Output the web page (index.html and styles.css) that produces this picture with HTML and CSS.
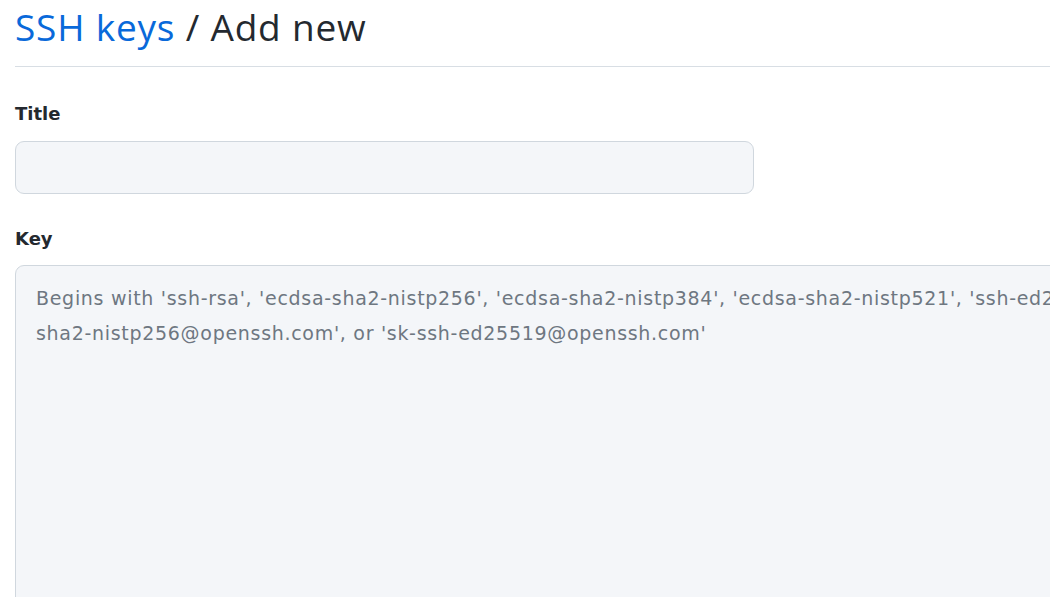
FILE: index.html
```html
<!DOCTYPE html>
<html lang="en">
<head>
<meta charset="utf-8">
<title>SSH keys / Add new</title>
<link rel="stylesheet" href="styles.css">
</head>
<body>
<main class="page">
  <h1 class="page-title"><a class="crumb" href="#">SSH keys</a> / Add new</h1>
  <form class="form">
    <div class="field field-title">
      <label class="label" for="title">Title</label>
      <input class="input" id="title" type="text">
    </div>
    <div class="field">
      <label class="label" for="key">Key</label>
      <textarea class="textarea" id="key" placeholder="Begins with 'ssh-rsa', 'ecdsa-sha2-nistp256', 'ecdsa-sha2-nistp384', 'ecdsa-sha2-nistp521', 'ssh-ed25519', 'sk-ecdsa-&#10;sha2-nistp256@openssh.com', or 'sk-ssh-ed25519@openssh.com'"></textarea>
    </div>
  </form>
</main>
</body>
</html>
```
FILE: styles.css
```css
html, body {
  margin: 0;
  padding: 0;
  background: #ffffff;
  overflow: hidden;
}
body {
  font-family: "DejaVu Sans", "Open Sans", sans-serif;
  color: #24292f;
}
.page {
  width: 1400px;
  padding: 0 0 0 15px;
}
.page-title {
  margin: 0;
  padding: 6px 0 18px;
  font-family: "Open Sans", "Noto Sans", sans-serif;
  font-size: 37px;
  font-weight: 400;
  letter-spacing: 0.8px;
  line-height: 42px;
  border-bottom: 1px solid #d8dee4;
  color: #24292f;
}
.crumb {
  color: #0969da;
  text-decoration: none;
}
.form {
  display: flex;
  flex-direction: column;
  gap: 33px;
  padding-top: 35px;
}
.field {
  display: flex;
  flex-direction: column;
  gap: 14px;
}
.field-title {
  gap: 15px;
}
.label {
  font-size: 18px;
  font-weight: 700;
  line-height: 24px;
}
.input {
  box-sizing: border-box;
  width: 739px;
  height: 53px;
  border: 1px solid #d0d7de;
  border-radius: 9px;
  background: #f4f6f9;
  font: inherit;
}
.textarea {
  box-sizing: border-box;
  width: 1400px;
  height: 360px;
  padding: 15px 20px;
  border: 1px solid #d0d7de;
  border-radius: 9px;
  background: #f4f6f9;
  font-family: "DejaVu Sans", sans-serif;
  font-size: 19px;
  letter-spacing: 0.7px;
  line-height: 35px;
  resize: none;
}
.textarea::placeholder {
  color: #6e7781;
  opacity: 1;
}
```
